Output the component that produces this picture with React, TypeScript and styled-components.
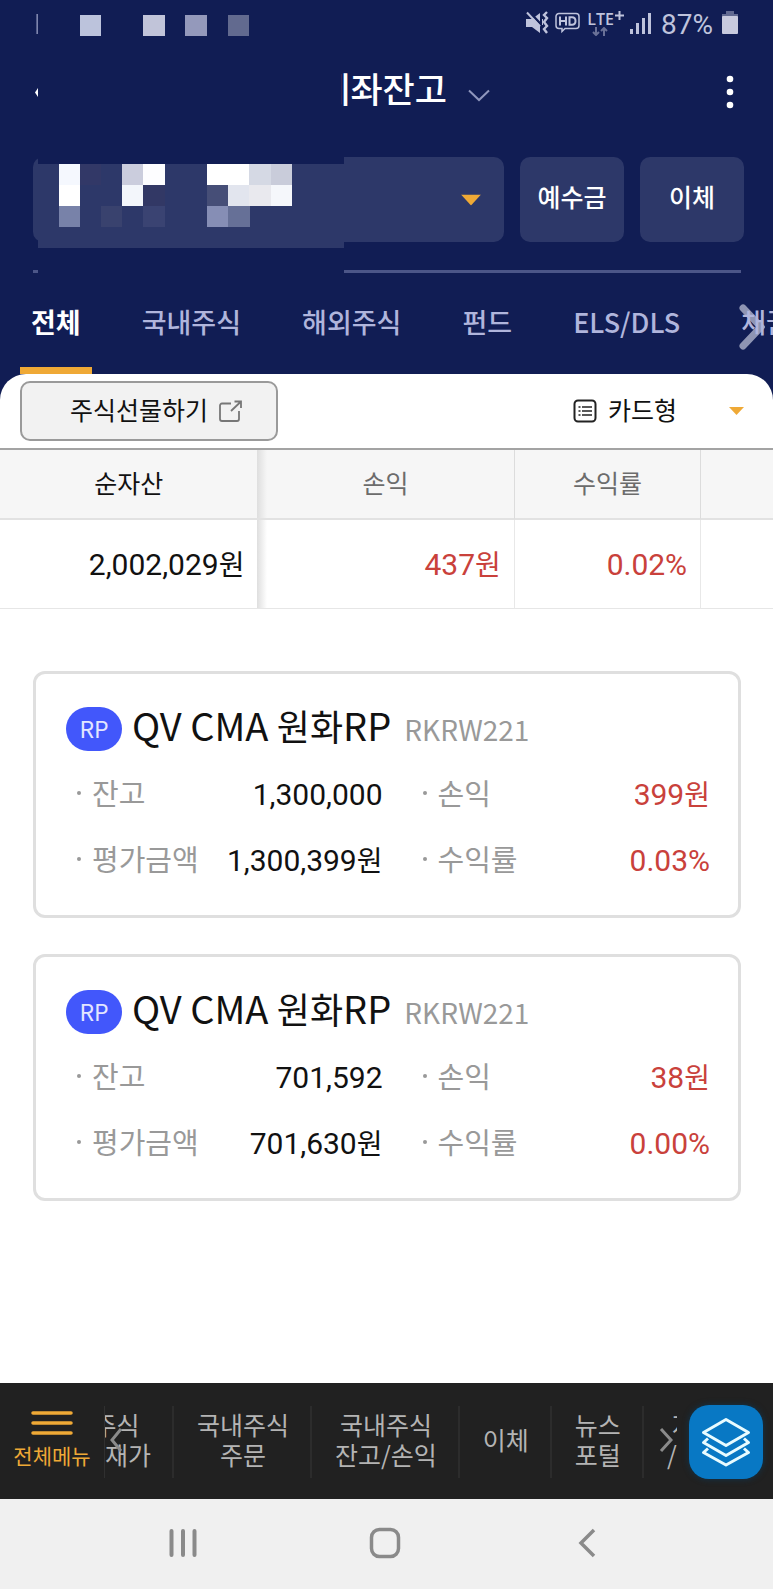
import React from "react";
import styled, { createGlobalStyle } from "styled-components";

const navy = "#111d54";
const slate = "#2d3869";
const amber = "#efa936";
const red = "#c9413b";
const hangul = `"Noto Sans CJK KR", sans-serif`;
const digits = `Roboto, "Noto Sans CJK KR", sans-serif`;

const GlobalStyle = createGlobalStyle`
  *, *::before, *::after { box-sizing: border-box; }
  body { margin: 0; background: #fff; font-family: ${hangul}; color: #111; }
  button, select { font: inherit; color: inherit; border: 0; background: none; padding: 0; margin: 0; border-radius: 0; }
  button { cursor: pointer; }
  select { appearance: none; }
  h1, h2, dl, dd { margin: 0; font-weight: 400; }
  svg { display: block; flex: none; }
`;

const Page = styled.div`
  display: flex;
  flex-direction: column;
  min-height: 100vh;
  overflow-x: hidden;
`;

/* ---------- navy top ---------- */

const Top = styled.header`
  background: ${navy};
  color: #fff;
`;

const StatusBar = styled.div`
  display: flex;
  align-items: center;
  justify-content: space-between;
  height: 46px;
  padding: 0 34px 0 36px;
`;

const StatusIcons = styled.div`
  display: flex;
  align-items: center;
  gap: 6px;
  color: #bfc3dc;
`;

const Network = styled.div`
  display: flex;
  flex-direction: column;
  align-items: flex-start;
  font: 600 16px/16px "Open Sans", sans-serif;
`;

const NetworkName = styled.span`
  display: flex;
  gap: 1px;
`;

const Battery = styled.span`
  padding: 3px 3px 0 4px;
  font: 400 28px/32px Roboto, sans-serif;
`;

const TitleBar = styled.div`
  display: grid;
  grid-template-columns: 1fr auto 1fr;
  align-items: center;
  height: 92px;
  padding: 0 36px 0 34px;
`;

const TitleButton = styled.button`
  display: flex;
  align-items: center;
  gap: 21px;
  padding-left: 60px;

  svg { margin-top: 6px; }
`;

const TitleClip = styled.h1`
  display: flex;
  justify-content: flex-end;
  width: 106px;
  overflow: hidden;
  white-space: nowrap;
  font-size: 35px;
  line-height: 48px;
  font-weight: 500;
  padding-bottom: 9px;
`;

const IconButton = styled.button<{ $end?: boolean }>`
  display: flex;
  justify-self: ${(p) => (p.$end ? "end" : "start")};
`;

const AccountRow = styled.div`
  display: flex;
  gap: 16px;
  padding: 19px 29px 0 33px;
`;

const AccountBox = styled.div`
  position: relative;
  display: flex;
  flex: 1;
  height: 85px;
  border-radius: 10px;
  background: ${slate};
`;

const AccountSelect = styled.select`
  flex: 1;
  min-width: 0;
  font-size: 25px;
`;

const Mask = styled.svg`
  position: absolute;
  left: 5px;
  top: 0;
  pointer-events: none;
`;

const Caret = styled.svg<{ $right: number }>`
  position: absolute;
  right: ${(p) => p.$right}px;
  top: 50%;
  transform: translateY(-50%);
  pointer-events: none;
`;

const ActionButton = styled.button`
  flex: none;
  width: 104px;
  height: 85px;
  padding-bottom: 7px;
  border-radius: 10px;
  background: ${slate};
  font-size: 25px;
  font-weight: 500;
`;

const Divider = styled.div`
  display: flex;
  justify-content: space-between;
  gap: 306px;
  margin: 28px 32px 0 33px;
`;

const DividerPart = styled.span<{ $grow?: boolean }>`
  flex: ${(p) => (p.$grow ? "1" : "0 0 5px")};
  height: 3px;
  background: #4c5688;
`;

const TabBar = styled.nav`
  position: relative;
  overflow: hidden;
`;

const Tabs = styled.div`
  position: relative;
  z-index: 1;
  display: flex;
  gap: 39px;
  height: 101px;
  padding-left: 20px;
`;

const Tab = styled.button<{ $active?: boolean }>`
  flex: none;
  padding: 2px 11px 0;
  border-bottom: 7px solid ${(p) => (p.$active ? amber : "transparent")};
  color: ${(p) => (p.$active ? "#fff" : "#b0b5dc")};
  font-size: 27px;
  font-weight: ${(p) => (p.$active ? 700 : 500)};
  white-space: nowrap;
`;

const TabsMore = styled.svg`
  position: absolute;
  right: 8px;
  top: 30px;
  pointer-events: none;
`;

/* ---------- white content ---------- */

const Main = styled.main`
  flex: 1;
  background: ${navy};
  display: flex;
`;

const Sheet = styled.div`
  flex: 1;
  min-width: 0;
  background: #fff;
  border-radius: 26px 26px 0 0;
`;

const Toolbar = styled.div`
  display: flex;
  align-items: center;
  justify-content: space-between;
  height: 76px;
  padding: 0 29px 0 20px;
  border-bottom: 2px solid #a3a3a3;
`;

const GiftButton = styled.button`
  display: flex;
  align-items: center;
  justify-content: center;
  gap: 11px;
  width: 258px;
  height: 60px;
  padding-left: 15px;
  border: 2px solid #9a9a9a;
  border-radius: 10px;
  background: #f2f2f2;
  font-size: 25px;
  line-height: 36px;

  span { padding-bottom: 5px; }
`;

const ViewPicker = styled.div`
  position: relative;
  display: flex;
  align-items: center;
  gap: 11px;
`;

const ViewSelect = styled.select`
  width: 136px;
  font-size: 25px;
  line-height: 36px;
  padding-bottom: 4px;
`;

const Summary = styled.table`
  width: 100%;
  table-layout: fixed;
  border-collapse: separate;
  border-spacing: 0;
`;

const HeadCell = styled.th<{ $strong?: boolean }>`
  height: 70px;
  padding: 0 0 5px;
  background: #f6f6f6;
  border-bottom: 2px solid #e2e2e2;
  color: ${(p) => (p.$strong ? "#111" : "#6c6c6c")};
  font-size: 25px;
  font-weight: 400;

  &:nth-child(2), &:nth-child(3) { border-right: 1px solid #dcdcdc; }
  &:nth-child(2) { background: linear-gradient(90deg, #dedede, #f6f6f6 10px); }
`;

const Cell = styled.td<{ $red?: boolean }>`
  height: 89px;
  padding: 1px 13px 0 0;
  border-bottom: 1px solid #e6e6e6;
  text-align: right;
  color: ${(p) => (p.$red ? red : "#111")};
  font: 400 30px/40px ${digits};

  &:nth-child(2), &:nth-child(3) { border-right: 1px solid #e8e8e8; }
  &:nth-child(2) { background: linear-gradient(90deg, #dedede, #fff 10px); }
`;

const Won = styled.span`
  font: 400 28px/30px ${hangul};
`;

const CardList = styled.div`
  display: flex;
  flex-direction: column;
  gap: 36px;
  padding: 62px 32px 80px 33px;
`;

const Card = styled.article`
  height: 247px;
  padding: 27px 28px 0 30px;
  border: 3px solid #dfdfdf;
  border-radius: 12px;
`;

const CardHead = styled.div`
  display: flex;
  align-items: center;
  height: 56px;
`;

const Badge = styled.span`
  width: 56px;
  height: 44px;
  margin-right: 10px;
  border-radius: 22px;
  background: #4257fb;
  color: #e3e6ff;
  font-size: 23px;
  line-height: 42px;
  text-align: center;
`;

const ProductName = styled.h2`
  font-size: 38px;
  line-height: 50px;
  white-space: nowrap;
  padding-bottom: 9px;

  span { font-size: 36px; }
`;

const ProductCode = styled.span`
  margin-left: 13px;
  color: #999;
  font-size: 28px;
  line-height: 38px;
`;

const Stats = styled.dl`
  display: grid;
  grid-template-columns: 306fr 288fr;
  column-gap: 39px;
  padding: 5px 0 0 10px;
`;

const Stat = styled.div`
  display: flex;
  align-items: center;
  justify-content: space-between;
  height: 66px;
  white-space: nowrap;
`;

const StatName = styled.dt`
  display: flex;
  color: #999;
  font-size: 29px;
  line-height: 40px;
  padding-bottom: 6px;

  &::before {
    content: "";
    width: 4px;
    height: 4px;
    margin: 19px 11px 0 1px;
    border-radius: 2px;
    background: #999;
  }
`;

const StatValue = styled.dd<{ $red?: boolean }>`
  color: ${(p) => (p.$red ? red : "#111")};
  font: 400 30px/40px ${digits};
`;

/* ---------- bottom bars ---------- */

const Dock = styled.nav`
  display: flex;
  align-items: center;
  height: 116px;
  padding: 2px 10px 0 0;
  background: #212121;
  color: #b4b4b4;
`;

const MenuButton = styled.button`
  display: flex;
  flex-direction: column;
  align-items: center;
  gap: 4px;
  width: 104px;
  padding: 0 0 4px;
  color: ${amber};
  font-size: 21px;
  line-height: 30px;
`;

const Shortcuts = styled.div`
  position: relative;
  display: flex;
  flex: 1;
  min-width: 0;
  height: 72px;
  border-left: 1px solid #303030;
`;

const Strip = styled.div`
  display: flex;
  flex: 1;
  min-width: 0;
  overflow: hidden;
`;

const Shortcut = styled.button<{ $scrolled?: boolean }>`
  flex: none;
  height: 72px;
  margin-left: ${(p) => (p.$scrolled ? "-46px" : "0")};
  padding: 0 21px 7px 23px;
  border-right: 2px solid #2c2c2c;
  font-size: 25px;
  line-height: 30px;
  white-space: pre;
`;

const StripArrow = styled.svg<{ $side: "left" | "right" }>`
  position: absolute;
  ${(p) => p.$side}: 4px;
  top: 22px;
  pointer-events: none;
`;

const Fab = styled.button`
  display: flex;
  align-items: center;
  justify-content: center;
  flex: none;
  width: 74px;
  height: 74px;
  margin-left: 12px;
  border-radius: 20px;
  background: #0878c4;
  box-shadow: 0 0 6px #10354e;
`;

const SystemBar = styled.nav`
  display: grid;
  grid-template-columns: repeat(3, 202px);
  justify-content: center;
  align-items: center;
  height: 90px;
  padding: 0 4px 2px 0;
  background: #f0f0f0;
`;

const SystemKey = styled.button`
  display: flex;
  justify-content: center;
`;

const Blocks = () => (
  <svg width="214" height="26" aria-hidden="true">
    <rect x="0.5" y="4" width="1.3" height="20" fill="#9aa0c4" />
    <rect x="44" y="5" width="21" height="21" fill="#bcc3dc" />
    <rect x="107" y="5" width="22" height="21" fill="#c1c4d9" />
    <rect x="149" y="5" width="22" height="21" fill="#9499bb" />
    <rect x="192" y="5" width="21" height="21" fill="#626a8f" />
  </svg>
);

// [column, row, colour] on a grid of 21px squares
const tiles: [number, number, string][] = [
  [1, 0, "#f5f8fe"], [2, 0, "#323867"], [4, 0, "#cbcddd"], [5, 0, "#fdfdff"],
  [8, 0, "#fff"], [9, 0, "#fff"], [10, 0, "#d5d9e4"], [11, 0, "#c9ccda"],
  [1, 1, "#fff"], [4, 1, "#f3f6fb"], [5, 1, "#323865"],
  [8, 1, "#464e77"], [9, 1, "#e2e5ee"], [10, 1, "#e9e9ee"], [11, 1, "#f5f7fb"],
  [1, 2, "#7882a9"], [3, 2, "#39426e"], [5, 2, "#3a4372"],
  [8, 2, "#868eb5"], [9, 2, "#667097"],
];

const Mosaic = () => (
  <Mask width="306" height="91" shapeRendering="crispEdges" aria-hidden="true">
    <rect width="306" height="91" fill={slate} />
    <rect width="306" height="7" fill={navy} />
    {tiles.map(([c, r, fill]) => (
      <rect key={`${c}-${r}`} x={c * 21.2 - 0.6} y={7 + r * 21} width="21.3" height="21" fill={fill} />
    ))}
  </Mask>
);

const holdings = [
  { balance: "1,300,000", value: "1,300,399", profit: "399", rate: "0.03%" },
  { balance: "701,592", value: "701,630", profit: "38", rate: "0.00%" },
];

const shortcuts = ["주식\n현재가", "국내주식\n주문", "국내주식\n잔고/손익", "이체", "뉴스\n포털", "지수\n/환율"];

export default function App() {
  return (
    <Page>
      <GlobalStyle />
      <Top>
        <StatusBar>
          <Blocks />
          <StatusIcons>
            <svg width="24" height="24" viewBox="0 0 24 24" fill="none" stroke="currentColor" aria-hidden="true">
              <path d="M1 8h6l8-6v20l-8-6H1z" fill="currentColor" stroke="none" />
              <path d="M4 0.500l13 14" stroke={navy} strokeWidth="2.500" />
              <path d="M2 1.500l13 14" strokeWidth="2" />
              <path d="M17.500 8v6" strokeWidth="1" />
              <path d="M22 1l-3 3 3 3-3 4 3 4-3 3 3 4" strokeWidth="2.400" />
            </svg>
            <svg width="26" height="22" viewBox="0 0 26 22" fill="none" stroke="currentColor" aria-hidden="true">
              <path d="M4 1.500h17a3 3 0 0 1 3 3v9a3 3 0 0 1-3 3H10l-3 3v-3H4a3 3 0 0 1-3-3v-9a3 3 0 0 1 3-3z" strokeWidth="1.500" />
              <path d="M5 4.500v9M11 4.500v9M5 9h6M14.500 5.200v7.600h2.500q3.500 0 3.500-3.800t-3.500-3.800z" strokeWidth="2" />
            </svg>
            <Network>
              <NetworkName>
                LTE
                <svg width="9" height="9" viewBox="0 0 9 9" stroke="currentColor" strokeWidth="2" aria-label="plus">
                  <path d="M4.500 0v9M0 4.500h9" />
                </svg>
              </NetworkName>
              <svg width="28" height="9" viewBox="0 0 28 9" fill="none" stroke="#6a7197" strokeWidth="2" aria-hidden="true">
                <path d="M9 0v8M6 5l3 3 3-3M17 9V1M14 4l3-3 3 3" />
              </svg>
            </Network>
            <svg width="21" height="22" viewBox="0 0 21 22" fill="currentColor" aria-hidden="true">
              <path d="M0 17h3v5H0zM6 11h3v11H6zM12 6h3v16h-3zM18 1h3v21h-3z" />
            </svg>
            <Battery>87%</Battery>
            <svg width="17" height="24" viewBox="0 0 17 24" aria-hidden="true">
              <path d="M4 0h8v3h4v3H0V3h4z" fill="#626a92" />
              <rect y="5" width="16" height="18" rx="1" fill="#c8cade" />
            </svg>
          </StatusIcons>
        </StatusBar>

        <TitleBar>
          <IconButton aria-label="뒤로">
            <svg width="5" height="9" viewBox="0 0 5 9" fill="#fff"><path d="M4 0v9L1 4.500z" /></svg>
          </IconButton>
          <TitleButton>
            <TitleClip>계좌잔고</TitleClip>
            <svg width="22" height="13" viewBox="0 0 22 13" fill="none" stroke="#8f96bd" strokeWidth="2" aria-hidden="true">
              <path d="M1 1.500l10 9.500 10-9.500" />
            </svg>
          </TitleButton>
          <IconButton $end aria-label="더보기">
            <svg width="14" height="34" viewBox="0 0 14 34" fill="#fff">
              <circle cx="7" cy="4" r="3.300" /><circle cx="7" cy="17" r="3.300" /><circle cx="7" cy="30" r="3.300" />
            </svg>
          </IconButton>
        </TitleBar>

        <AccountRow>
          <AccountBox>
            <AccountSelect aria-label="계좌 선택"><option /></AccountSelect>
            <Mosaic />
            <Caret $right={23} width="20" height="11" viewBox="0 0 20 11" fill={amber} aria-hidden="true">
              <path d="M0 0h20L10 11z" />
            </Caret>
          </AccountBox>
          <ActionButton>예수금</ActionButton>
          <ActionButton>이체</ActionButton>
        </AccountRow>
        <Divider>
          <DividerPart />
          <DividerPart $grow />
        </Divider>

        <TabBar aria-label="자산 종류">
          <Tabs>
            <Tab $active>전체</Tab>
            <Tab>국내주식</Tab>
            <Tab>해외주식</Tab>
            <Tab>펀드</Tab>
            <Tab>ELS/DLS</Tab>
            <Tab>채권</Tab>
          </Tabs>
          <TabsMore width="26" height="48" viewBox="0 0 26 48" fill="none" aria-hidden="true">
            <path d="M4 5l18 19L4 43" stroke="#8f95b3" strokeWidth="7" strokeLinecap="round" />
          </TabsMore>
        </TabBar>
      </Top>

      <Main>
        <Sheet>
          <Toolbar>
            <GiftButton>
              <span>주식선물하기</span>
              <svg width="24" height="22" viewBox="0 0 24 22" fill="none" stroke="#777" strokeWidth="1.800" aria-hidden="true">
                <path d="M12 3.500H3a2 2 0 0 0-2 2V19a2 2 0 0 0 2 2h15a2 2 0 0 0 2-2v-8M12 11L22 1.500M15.500 1.500H22V8" />
              </svg>
            </GiftButton>
            <ViewPicker>
              <svg width="24" height="24" viewBox="0 0 24 24" fill="none" stroke="#222" aria-hidden="true">
                <rect x="1.500" y="1.500" width="21" height="21" rx="3.500" strokeWidth="2" />
                <path d="M9 8h10M9 12h10M9 16h10M5.500 8h2M5.500 12h2M5.500 16h2" strokeWidth="1.500" />
              </svg>
              <ViewSelect aria-label="보기 방식"><option>카드형</option></ViewSelect>
              <Caret $right={0} width="15" height="8" viewBox="0 0 15 8" fill={amber} aria-hidden="true">
                <path d="M0 0h15L7.500 8z" />
              </Caret>
            </ViewPicker>
          </Toolbar>

          <Summary>
            <colgroup>
              <col style={{ width: "33.3%" }} />
              <col style={{ width: "33.3%" }} />
              <col style={{ width: "24.1%" }} />
              <col />
            </colgroup>
            <thead>
              <tr>
                <HeadCell $strong>순자산</HeadCell>
                <HeadCell>손익</HeadCell>
                <HeadCell>수익률</HeadCell>
                <HeadCell />
              </tr>
            </thead>
            <tbody>
              <tr>
                <Cell>2,002,029<Won>원</Won></Cell>
                <Cell $red>437<Won>원</Won></Cell>
                <Cell $red>0.02%</Cell>
                <Cell />
              </tr>
            </tbody>
          </Summary>

          <CardList>
            {holdings.map((h) => (
              <Card key={h.balance}>
                <CardHead>
                  <Badge>RP</Badge>
                  <ProductName>QV CMA <span>원화</span>RP</ProductName>
                  <ProductCode>RKRW221</ProductCode>
                </CardHead>
                <Stats>
                  <Stat>
                    <StatName>잔고</StatName>
                    <StatValue>{h.balance}</StatValue>
                  </Stat>
                  <Stat>
                    <StatName>손익</StatName>
                    <StatValue $red>{h.profit}<Won>원</Won></StatValue>
                  </Stat>
                  <Stat>
                    <StatName>평가금액</StatName>
                    <StatValue>{h.value}<Won>원</Won></StatValue>
                  </Stat>
                  <Stat>
                    <StatName>수익률</StatName>
                    <StatValue $red>{h.rate}</StatValue>
                  </Stat>
                </Stats>
              </Card>
            ))}
          </CardList>
        </Sheet>
      </Main>

      <Dock aria-label="바로가기">
        <MenuButton>
          <svg width="42" height="26" viewBox="0 0 42 26" stroke={amber} strokeWidth="3.500" strokeLinecap="round" aria-hidden="true">
            <path d="M2 3h38M2 13h38M2 23h38" />
          </svg>
          전체메뉴
        </MenuButton>
        <Shortcuts>
          <Strip>
            {shortcuts.map((label, i) => (
              <Shortcut key={label} $scrolled={i === 0}>{label}</Shortcut>
            ))}
          </Strip>
          <StripArrow $side="left" width="14" height="24" viewBox="0 0 14 24" fill="none" stroke="#8b8b8b" strokeWidth="3" aria-hidden="true">
            <path d="M12 1L3 12l9 11" />
          </StripArrow>
          <StripArrow $side="right" width="14" height="24" viewBox="0 0 14 24" fill="none" stroke="#8b8b8b" strokeWidth="3" aria-hidden="true">
            <path d="M2 1l10 11L2 23" />
          </StripArrow>
        </Shortcuts>
        <Fab aria-label="퀵메뉴">
          <svg width="50" height="50" viewBox="0 0 50 50" fill="none" stroke="#e8fbff" strokeWidth="3" strokeLinejoin="round" aria-hidden="true">
            <path d="M25 2.500L47.500 15.500 25 28.500 2.500 15.500z" />
            <path d="M7 21.500L2.500 25.500 25 38.500l22.500-13L43 21.500" />
            <path d="M7 31.500L2.500 35.500 25 48l22.500-12.500L43 31.500" />
          </svg>
        </Fab>
      </Dock>

      <SystemBar aria-label="시스템">
        <SystemKey aria-label="최근 앱">
          <svg width="28" height="30" viewBox="0 0 28 30" stroke="#8a8a8a" strokeWidth="4" strokeLinecap="round">
            <path d="M2.500 3v24M14 3v24M25.500 3v24" />
          </svg>
        </SystemKey>
        <SystemKey aria-label="홈">
          <svg width="32" height="32" viewBox="0 0 32 32" fill="none" stroke="#8a8a8a" strokeWidth="3.500">
            <rect x="2.500" y="2.500" width="27" height="27" rx="8" />
          </svg>
        </SystemKey>
        <SystemKey aria-label="뒤로 가기">
          <svg width="18" height="30" viewBox="0 0 18 30" fill="none" stroke="#8a8a8a" strokeWidth="3.500">
            <path d="M16 2L3 15l13 13" />
          </svg>
        </SystemKey>
      </SystemBar>
    </Page>
  );
}
